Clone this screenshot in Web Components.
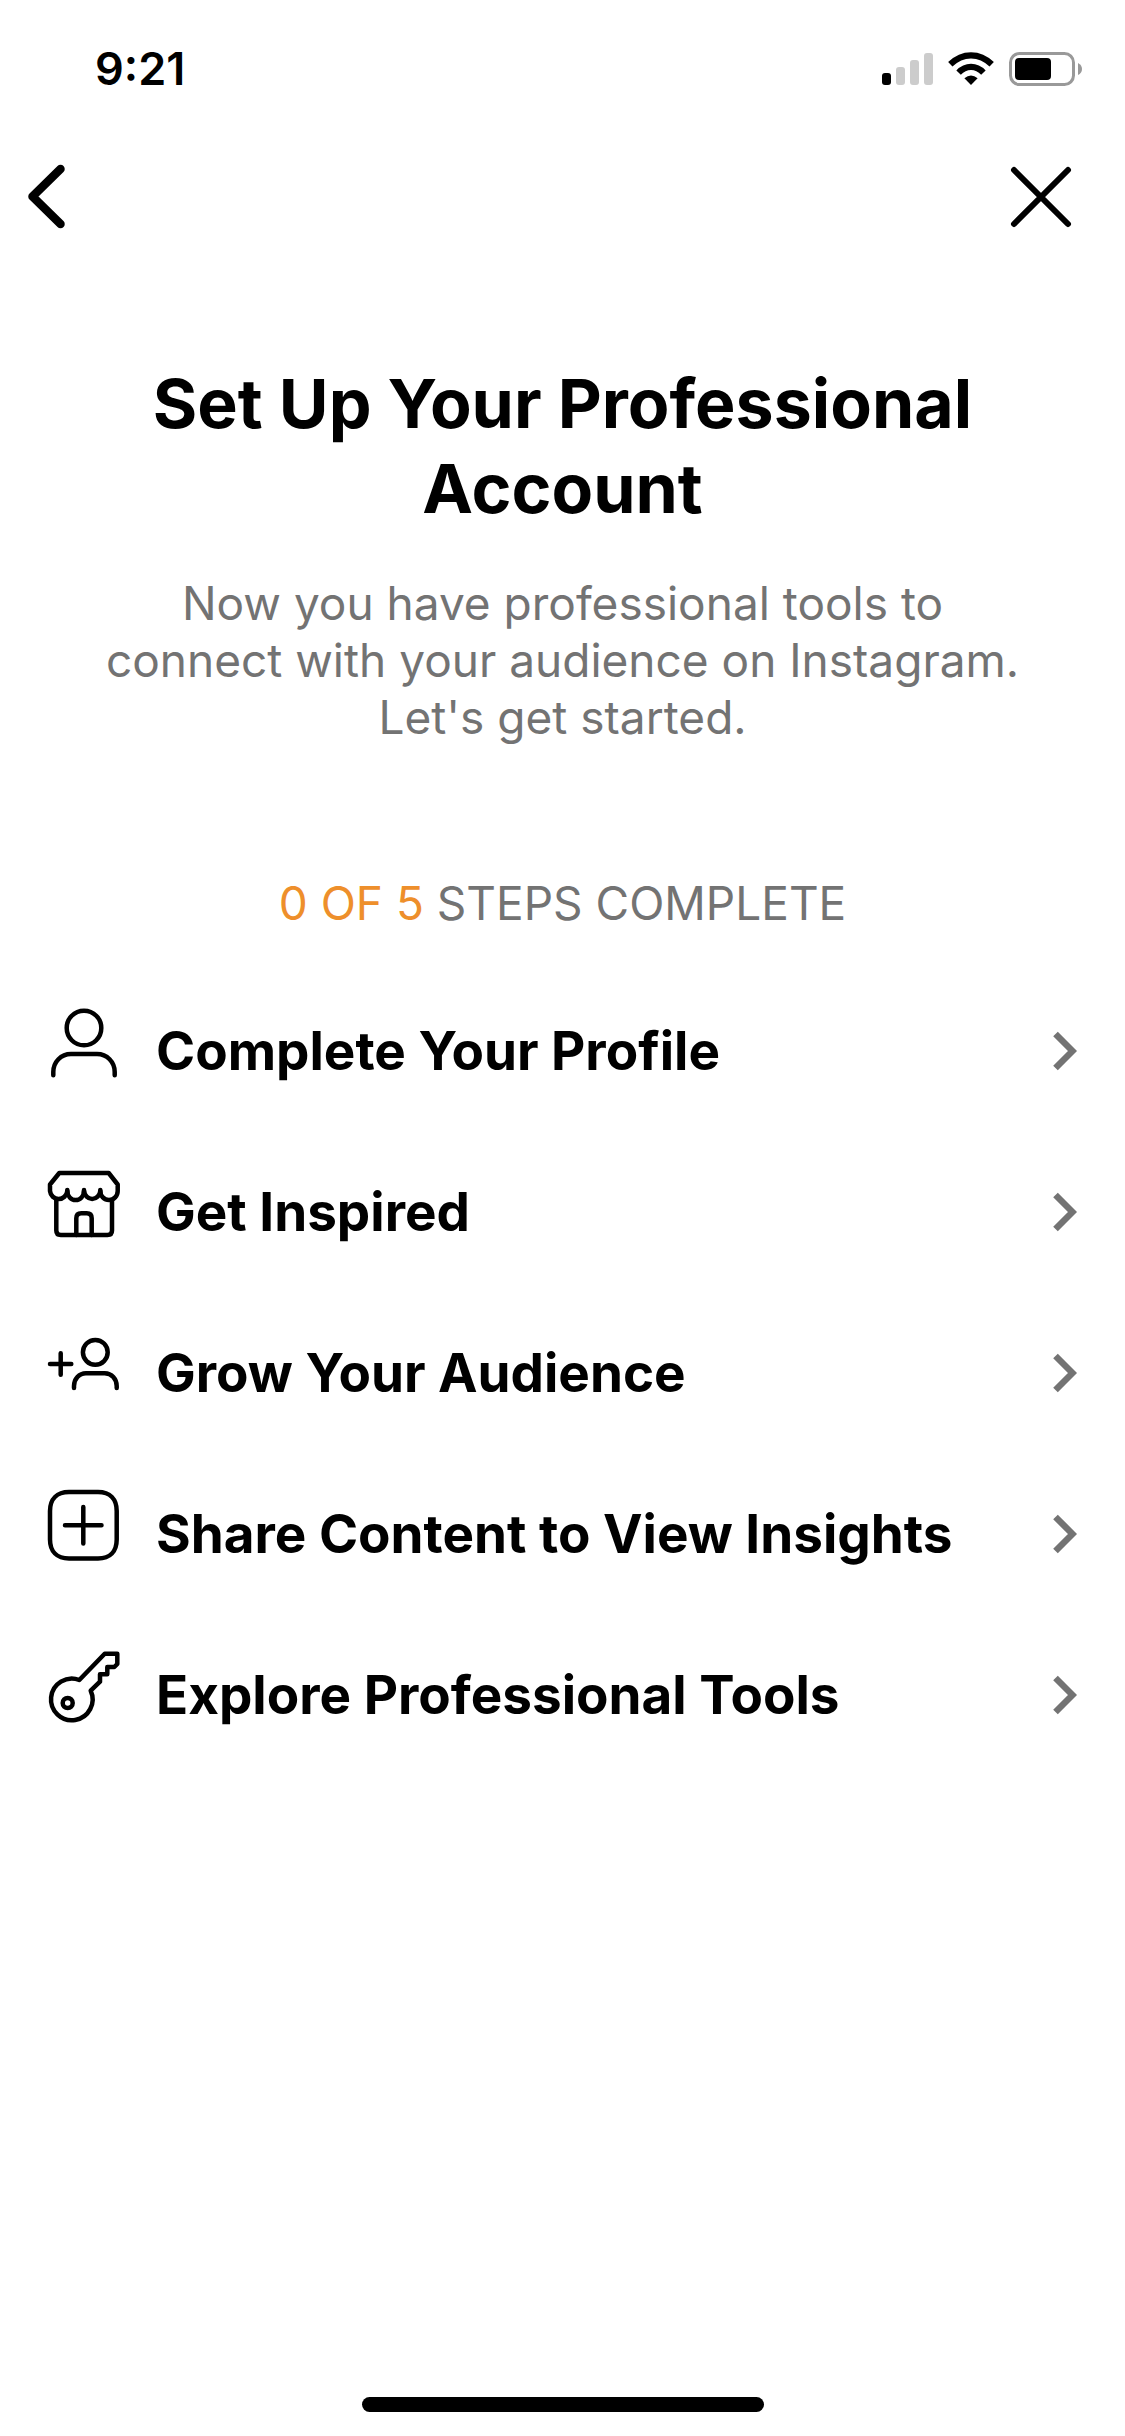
<!DOCTYPE html>
<html lang="en">
<head>
<meta charset="utf-8">
<meta name="viewport" content="width=device-width, initial-scale=1">
<title>Set Up Your Professional Account</title>
<style>
  body { margin: 0; background: #fff; color: #000; font-family: Inter, "Liberation Sans", sans-serif; }
</style>
</head>
<body>
<setup-screen></setup-screen>
<script>
const define = (name, html, setup) => {
  const template = document.createElement('template');
  template.innerHTML = html;
  customElements.define(name, class extends HTMLElement {
    connectedCallback() {
      if (this.shadowRoot) return;
      const root = this.attachShadow({ mode: 'open' });
      root.append(template.content.cloneNode(true));
      if (setup) setup(this, root);
    }
  });
};

const ICONS = {
  profile: '<circle cx="36" cy="20" r="17.3"/><path d="M5.3 67.3V64C5.3 54 13 46 23 46H49C59 46 66.7 54 66.7 64V67.3"/>',
  shop: '<path d="M11.3 4H60.7L69.7 15.5V22A8.7 9 0 0 1 52.3 22A8.2 9 0 0 1 36 22A8.3 9 0 0 1 19.3 22A8.7 9 0 0 1 2 22V15.5Z"/><path d="M19.3 21V24M36 21V24M52.3 21V24"/><path d="M8.3 31V61.5Q8.3 66 12.8 66H59.5Q64 66 64 61.5V31"/><path d="M28.3 66V49.3Q28.3 44.3 33.3 44.3H38.7Q43.7 44.3 43.7 49.3V66"/>',
  grow: '<circle cx="47.3" cy="22.3" r="12.4"/><path d="M26 58V56C26 49 31 43.2 38 43.2H56.7C63.7 43.2 68.7 49 68.7 56V58M2 34H23.3M12.7 23.3V44.7"/>',
  share: '<path d="M21 1H50C62 1 68.7 8 68.7 20V48.5C68.7 60.5 62 67.5 50 67.5H21C9 67.5 2 60.5 2 48.5V20C2 8 9 1 21 1ZM17 34.2H53.5M35.3 16V52.5"/>',
  key: '<path d="M31.3 28L56.7 1.7H69.3V12L66.3 15H59.3V22.3H52V29.7L42.7 38.7A20.8 20.8 0 1 1 31.3 28Z"/><circle cx="19.7" cy="51" r="5"/>'
};

define('status-bar', `
  <style>
    :host { display: flex; align-items: center; justify-content: space-between; height: 138px; padding: 0 43px 0 95px; }
    time { font-size: 45px; line-height: 54px; font-weight: 600; }
    .signals { display: flex; align-items: center; gap: 15px; }
    svg { display: block; }
  </style>
  <time>9:21</time>
  <div class="signals">
    <svg width="51" height="34" viewBox="0 0 51 34" role="img" aria-label="Signal">
      <rect y="21" width="9" height="12" rx="3"/>
      <g fill="#ccc"><rect x="14" y="15" width="9" height="18" rx="3"/><rect x="28" y="8" width="9" height="25" rx="3"/><rect x="42" y="1" width="9" height="32" rx="3"/></g>
    </svg>
    <svg width="46" height="34" viewBox="0 0 46 34" role="img" aria-label="Wi-Fi">
      <path d="M23 33L16.4 26.3Q23 20.7 29.6 26.3Z"/>
      <g fill="none" stroke="#000" stroke-width="6.2"><path d="M2.3 12.3Q11.5 3.3 23 3.3T43.7 12.3"/><path d="M10.6 20.6Q16 14.9 23 14.9T35.4 20.6"/></g>
    </svg>
    <svg width="73" height="34" viewBox="0 0 73 34" role="img" aria-label="Battery">
      <rect x="1.5" y="1.5" width="63" height="31" rx="9" fill="none" stroke="#999" stroke-width="3"/>
      <rect x="6" y="6" width="36" height="22" rx="4"/>
      <path d="M69 11Q73 13 73 17T69 23Z" fill="#999"/>
    </svg>
  </div>`);

define('nav-bar', `
  <style>
    :host { display: flex; align-items: center; justify-content: space-between; height: 118px; padding: 0 46px 0 20px; }
    button { display: block; padding: 0; border: 0; background: none; }
    svg { display: block; fill: none; stroke: #000; stroke-linecap: round; stroke-linejoin: round; }
  </style>
  <button type="button" aria-label="Back"><svg width="64" height="72" viewBox="0 0 64 72"><path stroke-width="8.5" d="M40.5 8L12.5 35.5L40.5 63"/></svg></button>
  <button type="button" aria-label="Close"><svg width="72" height="72" viewBox="0 0 72 72"><path stroke-width="6" d="M7 9L61 63M61 9L7 63"/></svg></button>`);

define('page-intro', `
  <style>
    :host { display: block; padding: 105px 96px 0; text-align: center; }
    h1 { margin: 0 0 44px; font-size: 68px; line-height: 85px; font-weight: 700; }
    p { margin: 0; font-size: 46px; line-height: 57px; color: #737373; }
  </style>
  <h1><slot name="title"></slot></h1>
  <p><slot></slot></p>`);

define('step-progress', `
  <style>
    :host { display: block; margin: 129px 0 38px; text-align: center; font-size: 46px; line-height: 57px; color: #737373; }
    .count { color: #ee8f2b; }
  </style>
  <span class="count"><slot name="count"></slot></span> <slot></slot>`);

define('step-item', `
  <style>
    :host { display: block; }
    button { display: flex; align-items: center; width: 100%; height: 161px; padding: 0 48px; border: 0; background: none; color: inherit; font: inherit; text-align: left; }
    svg { display: block; flex: none; fill: none; }
    .icon { margin: 0 36px 13px 0; overflow: visible; stroke: #000; stroke-width: 4.5; stroke-linecap: round; stroke-linejoin: round; }
    .label { flex: 1; font-size: 53px; line-height: 64px; font-weight: 700; }
  </style>
  <button type="button">
    <svg class="icon" width="72" height="72" viewBox="0 0 72 72" aria-hidden="true"></svg>
    <span class="label"><slot></slot></span>
    <svg width="24" height="40" viewBox="0 0 24 40" aria-hidden="true"><path d="M2.5 3L19.5 20L2.5 37" stroke="#737373" stroke-width="6.5"/></svg>
  </button>`, (host, root) => { root.querySelector('.icon').innerHTML = ICONS[host.getAttribute('icon')]; });

define('home-indicator', `
  <style>
    :host { display: flex; justify-content: center; margin-top: auto; padding-bottom: 24px; }
    span { width: 402px; height: 15px; border-radius: 8px; background: #000; }
  </style>
  <span></span>`);

define('setup-screen', `
  <style>
    :host { display: flex; flex-direction: column; min-height: 100vh; }
    main, nav { display: block; }
  </style>
  <status-bar></status-bar>
  <nav-bar></nav-bar>
  <main>
    <page-intro><span slot="title">Set Up Your Professional Account</span>Now you have professional tools to connect with your audience on Instagram. Let's get started.</page-intro>
    <step-progress><span slot="count">0 OF 5</span>STEPS COMPLETE</step-progress>
    <nav aria-label="Setup steps">
      <step-item icon="profile">Complete Your Profile</step-item>
      <step-item icon="shop">Get Inspired</step-item>
      <step-item icon="grow">Grow Your Audience</step-item>
      <step-item icon="share">Share Content to View Insights</step-item>
      <step-item icon="key">Explore Professional Tools</step-item>
    </nav>
  </main>
  <home-indicator></home-indicator>`);
</script>
</body>
</html>
